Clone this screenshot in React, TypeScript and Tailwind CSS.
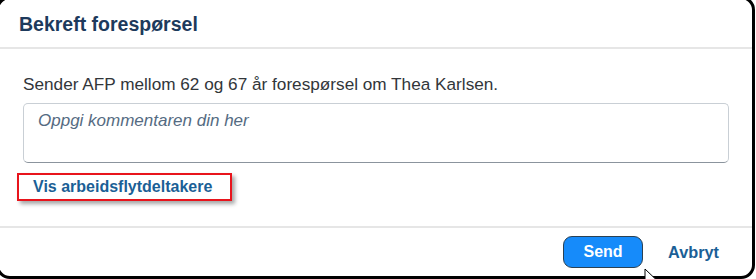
import React from 'react';

// Small arrow cursor peeking in under the Send button
const Cursor: React.FC = () => (
  <svg width="13" height="20" viewBox="0 0 13 20" className="absolute left-[644px] top-[268px]">
    <path d="M1 1 L1 16 L4.5 12.5 L7 18.5 L9.5 17.5 L7 11.5 L12 11.5 Z" fill="#ffffff" stroke="#000000" strokeWidth="1" strokeLinejoin="round" />
  </svg>
);

const App: React.FC = () => {
  return (
    <div className="relative w-[756px] h-[279px] overflow-hidden bg-white" style={{ fontFamily: '"Liberation Sans", Arial, sans-serif' }}>
      {/* Dialog, slightly bigger than the crop so its left/top border falls off-screen */}
      <div className="-ml-[4px] -mt-[4px] w-[759px] h-[283px] border-[3px] border-black rounded-[14px] bg-white flex flex-col overflow-hidden">
        {/* Header */}
        <div className="h-[50px] border-b-2 border-[#e6e6e6] pl-[20px] pt-[14px]">
          <h1 className="text-[19.5px] leading-[22px] font-bold text-[#1d3a5c]">Bekreft forespørsel</h1>
        </div>

        {/* Body */}
        <div className="flex-1 pt-[25px] pl-[24px] pr-[23px]">
          <p className="text-[17.2px] leading-[20px] text-[#32363a]">
            Sender AFP mellom 62 og 67 år forespørsel om Thea Karlsen.
          </p>
          <textarea
            placeholder="Oppgi kommentaren din her"
            className="mt-[9px] block w-full h-[60px] resize-none rounded-[5px] border border-[#c9cfd5] border-b-[#8b949d] pl-[14px] pt-[7px] text-[17px] leading-[20px] text-[#32363a] outline-none placeholder:italic placeholder:text-[#556b82]"
          />
          <div className="mt-[10px] -ml-[6px] inline-flex h-[28px] items-center border-2 border-[#e8141c] pl-[14px] pr-[18px] shadow-[3px_3px_4px_rgba(0,0,0,0.35)]">
            <a href="#" className="text-[16px] leading-[20px] font-bold text-[#1b5f96]">Vis arbeidsflytdeltakere</a>
          </div>
        </div>

        {/* Footer */}
        <div className="h-[50px] border-t-2 border-[#e6e6e6] flex items-center justify-end pr-[33px] gap-[25px]">
          <button className="w-[80px] h-[32px] rounded-[9px] border border-[#2b4153] bg-[#168bfa] text-white text-[16px] font-bold">
            Send
          </button>
          <a href="#" className="text-[16.3px] font-bold text-[#1b5f96]">Avbryt</a>
        </div>
      </div>
      <Cursor />
    </div>
  );
};

export default App;
